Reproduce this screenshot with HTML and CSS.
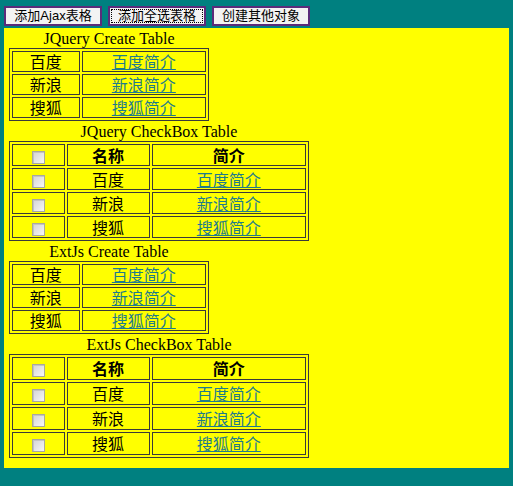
FILE: index.html
```html
<!DOCTYPE html>
<html>
<head>
<meta charset="utf-8">
<title>Tables</title>
<link rel="stylesheet" href="styles.css">
</head>
<body>
<div class="toolbar">
  <button class="btn">添加Ajax表格</button>
  <button class="btn focused"><span>添加全选表格</span></button>
  <button class="btn">创建其他对象</button>
</div>
<div class="panel">
  <table class="grid narrow">
    <caption>JQuery Create Table</caption>
    <tr><td class="c-name1">百度</td><td class="c-link1"><a href="#">百度简介</a></td></tr>
    <tr><td class="c-name1">新浪</td><td class="c-link1"><a href="#">新浪简介</a></td></tr>
    <tr><td class="c-name1">搜狐</td><td class="c-link1"><a href="#">搜狐简介</a></td></tr>
  </table>
  <table class="grid wide">
    <caption>JQuery CheckBox Table</caption>
    <tr><th class="c-chk"><input type="checkbox" class="chk"></th><th class="c-name2">名称</th><th class="c-link2">简介</th></tr>
    <tr><td class="c-chk"><input type="checkbox" class="chk"></td><td class="c-name2">百度</td><td class="c-link2"><a href="#">百度简介</a></td></tr>
    <tr><td class="c-chk"><input type="checkbox" class="chk"></td><td class="c-name2">新浪</td><td class="c-link2"><a href="#">新浪简介</a></td></tr>
    <tr><td class="c-chk"><input type="checkbox" class="chk"></td><td class="c-name2">搜狐</td><td class="c-link2"><a href="#">搜狐简介</a></td></tr>
  </table>
  <table class="grid narrow">
    <caption>ExtJs Create Table</caption>
    <tr><td class="c-name1">百度</td><td class="c-link1"><a href="#">百度简介</a></td></tr>
    <tr><td class="c-name1">新浪</td><td class="c-link1"><a href="#">新浪简介</a></td></tr>
    <tr><td class="c-name1">搜狐</td><td class="c-link1"><a href="#">搜狐简介</a></td></tr>
  </table>
  <table class="grid wide ext">
    <caption>ExtJs CheckBox Table</caption>
    <tr><th class="c-chk"><input type="checkbox" class="chk"></th><th class="c-name2">名称</th><th class="c-link2">简介</th></tr>
    <tr><td class="c-chk"><input type="checkbox" class="chk"></td><td class="c-name2">百度</td><td class="c-link2"><a href="#">百度简介</a></td></tr>
    <tr><td class="c-chk"><input type="checkbox" class="chk"></td><td class="c-name2">新浪</td><td class="c-link2"><a href="#">新浪简介</a></td></tr>
    <tr><td class="c-chk"><input type="checkbox" class="chk"></td><td class="c-name2">搜狐</td><td class="c-link2"><a href="#">搜狐简介</a></td></tr>
  </table>
</div>
</body>
</html>
```

FILE: styles.css
```css
html, body {
  margin: 0;
  padding: 0;
  background: #008080;
}

body {
  font-family: "Liberation Serif", "Noto Sans CJK SC", serif;
  font-size: 16px;
  color: #000;
}

.toolbar {
  display: flex;
  gap: 6px;
  padding: 6px 4px 2px 4px;
}

.btn {
  width: 98px;
  height: 20px;
  margin: 0;
  padding: 0;
  border: 2px solid #5b2b7b;
  background: #f3f3f3;
  font-family: "Liberation Sans", "Noto Sans CJK SC", sans-serif;
  font-size: 13px;
  line-height: 14px;
  color: #000;
}

.focused {
  outline: 1px dotted #000;
  outline-offset: -4px;
}

.panel {
  margin: 0 4px;
  background: #ffff00;
  padding: 0 5px 10px 5px;
  height: 430px;
}

.grid {
  border: 1px solid #3a3a3a;
  border-spacing: 2px;
  font-family: "Noto Sans CJK SC", sans-serif;
}

.grid caption {
  font-family: "Liberation Serif", serif;
  font-size: 16px;
  line-height: 19px;
  height: 19px;
  padding-top: 1px;
}

.grid td, .grid th {
  border: 1px solid #3a3a3a;
  padding: 0;
  height: 19px;
  line-height: 19px;
  text-align: center;
  font-size: 16px;
}

.wide td, .wide th {
  height: 20px;
}

.ext td, .ext th {
  height: 21px;
}

.grid th {
  font-weight: bold;
}

.narrow { width: 200px; }
.wide { width: 300px; }

.c-name1 { width: 67px; }
.c-link1 { width: 125px; }

.c-chk { width: 51px; }
.c-name2 { width: 82px; }
.c-link2 { width: 154px; }

.grid a {
  color: #1e7b8c;
  text-decoration: underline;
}

.chk {
  appearance: none;
  -webkit-appearance: none;
  width: 13px;
  height: 13px;
  margin: 0;
  vertical-align: middle;
  border: 1px solid #a8a8a0;
  background: linear-gradient(135deg, #d4d4d4 0%, #f6f6f6 100%);
  box-shadow: inset 1px 1px 0 #c4c4c4;
}
```
